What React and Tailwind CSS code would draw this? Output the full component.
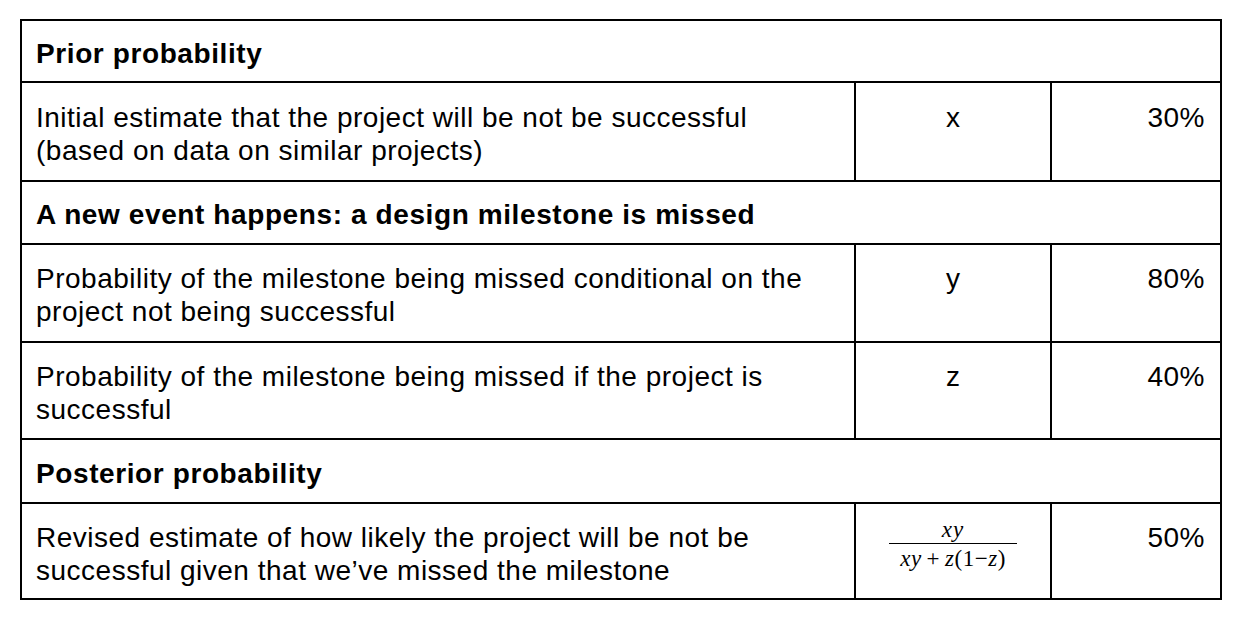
import React from "react";

const font = { fontFamily: '"Liberation Sans", Arial, Helvetica, sans-serif' };

function Header({ children, h, pt }) {
  return (
    <div className={`flex border-t-2 border-black ${h}`}>
      <div className={`pl-[14px] ${pt} text-[28px] leading-[33px] font-bold tracking-[0.6px] text-black`}>
        {children}
      </div>
    </div>
  );
}

function DataRow({ h, pt, label, sym, value }) {
  return (
    <div className={`flex border-t-2 border-black ${h}`}>
      <div className={`w-[832px] pl-[14px] pr-[20px] ${pt} text-[28px] leading-[33px] tracking-[0.5px] text-black`}>
        {label}
      </div>
      <div className={`w-[196px] border-l-2 border-black flex justify-center ${pt} text-[28px] leading-[33px] text-black`}>
        {sym}
      </div>
      <div className={`w-[170px] border-l-2 border-black pr-[15px] ${pt} text-right text-[28px] leading-[33px] tracking-[0.5px] text-black`}>
        {value}
      </div>
    </div>
  );
}

function Fraction() {
  const serif = { fontFamily: '"Liberation Serif", "Times New Roman", serif' };
  return (
    <div className="pt-[15px] flex justify-center w-full" style={serif}>
      <div className="inline-flex flex-col items-center text-[23px] leading-[22px] text-black">
        <div className="italic tracking-[1px]">xy</div>
        <div className="w-[128px] h-px bg-black mt-[2px] mb-[4px]" />
        <div className="tracking-[0.5px]">
          <span className="italic">xy</span>
          <span className="mx-[5px]">+</span>
          <span className="italic">z</span>
          <span>(1</span>
          <span>−</span>
          <span className="italic">z</span>
          <span>)</span>
        </div>
      </div>
    </div>
  );
}

export default function App() {
  return (
    <div className="w-[1236px] h-[620px] bg-white pt-[19px] pl-[20px]" style={font}>
      <div className="w-[1202px] border-2 border-black flex flex-col">
        <div className="flex h-[60px]">
          <div className="pl-[14px] pt-[16px] text-[28px] leading-[33px] font-bold tracking-[0.6px] text-black">
            Prior probability
          </div>
        </div>
        <DataRow
          h="h-[99px]"
          pt="pt-[18px]"
          label={<>Initial estimate that the project will be not be successful<br />(based on data on similar projects)</>}
          sym="x"
          value="30%"
        />
        <Header h="h-[63px]" pt="pt-[16px]">A new event happens: a design milestone is missed</Header>
        <DataRow
          h="h-[98px]"
          pt="pt-[17px]"
          label={<>Probability of the milestone being missed conditional on the<br />project not being successful</>}
          sym="y"
          value="80%"
        />
        <DataRow
          h="h-[97px]"
          pt="pt-[17px]"
          label={<>Probability of the milestone being missed if the project is<br />successful</>}
          sym="z"
          value="40%"
        />
        <Header h="h-[64px]" pt="pt-[17px]">Posterior probability</Header>
        <div className="flex border-t-2 border-black h-[96px]">
          <div className="w-[832px] pl-[14px] pt-[17px] text-[28px] leading-[33px] tracking-[0.5px] text-black">
            Revised estimate of how likely the project will be not be<br />successful given that we’ve missed the milestone
          </div>
          <div className="w-[196px] border-l-2 border-black flex">
            <Fraction />
          </div>
          <div className="w-[170px] border-l-2 border-black pr-[15px] pt-[17px] text-right text-[28px] leading-[33px] tracking-[0.5px] text-black">
            50%
          </div>
        </div>
      </div>
    </div>
  );
}
